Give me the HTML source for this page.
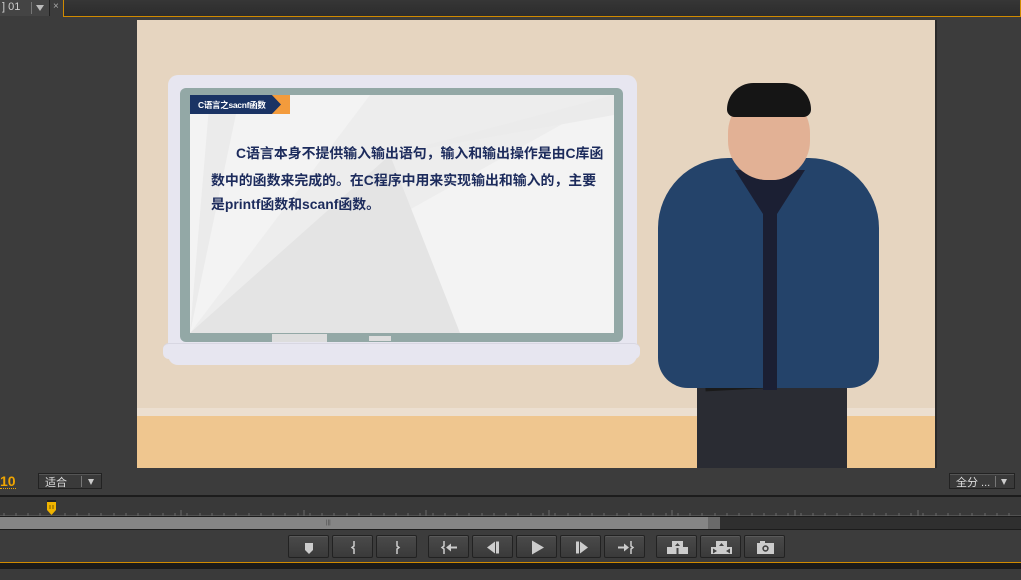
<!DOCTYPE html>
<html><head><meta charset="utf-8"><style>
*{margin:0;padding:0;box-sizing:border-box}
body{width:1021px;height:580px;background:#3c3c3c;position:relative;overflow:hidden;font-family:"Liberation Sans","Noto Sans CJK SC",sans-serif}
.a{position:absolute}
.btn{position:absolute;top:535px;width:41px;height:23px;background:linear-gradient(#4a4a4a,#3a3a3a);border:1px solid #222;box-shadow:inset 0 1px 0 #5a5a5a;border-radius:2px}
.btn svg{position:absolute;left:0;top:0}
.ln{position:absolute;white-space:nowrap;font-size:13.9px;line-height:18px;font-weight:bold;color:#1c2b5c}
</style></head><body>
<div class="a" style="left:0;top:0;width:50px;height:16px;background:#444;border-right:1px solid #222"></div>
<div class="a" style="left:2px;top:1px;font-size:11px;color:#ccc">] 01</div>
<div class="a" style="left:31px;top:2px;width:1px;height:12px;background:#777"></div>
<div class="a" style="left:36px;top:5px;border-left:4px solid transparent;border-right:4px solid transparent;border-top:6px solid #bbb"></div>
<div class="a" style="left:53px;top:1px;font-size:10px;color:#aaa">×</div>
<div class="a" style="left:63px;top:0;width:958px;height:17px;background:linear-gradient(#363636,#2c2c2c);border:1px solid #d08a00;border-top:none"></div>

<div class="a" style="left:137px;top:20px;width:798px;height:448px;background:#e6d5c0;overflow:hidden">
  <div class="a" style="left:0;top:388px;width:798px;height:8px;background:#ecdfd0"></div>
  <div class="a" style="left:0;top:396px;width:798px;height:52px;background:#efc68f"></div>
  <div class="a" style="left:31px;top:55px;width:469px;height:290px;background:#e7e6f0;border-radius:10px"></div>
  <div class="a" style="left:26px;top:323px;width:477px;height:16px;background:#e7e6f0;border-radius:6px;border-top:1px solid #d8d7e2"></div>
  <div class="a" style="left:43px;top:68px;width:443px;height:254px;background:#93a8a6;border-radius:6px"></div>
  <div class="a" style="left:135px;top:314px;width:55px;height:8px;background:#ddd"></div>
  <div class="a" style="left:232px;top:316px;width:22px;height:5px;background:#ddd"></div>
  <div class="a" style="left:53px;top:75px;width:424px;height:238px;background:#f3f3f3;overflow:hidden">
    <svg width="424" height="238" class="a" style="left:0;top:0">
      <polygon points="0,238 180,0 424,0" fill="#e9e9e9" opacity=".6"/>
      <polygon points="0,238 200,60 270,238" fill="#e4e4e4"/>
      <polygon points="0,238 20,0 50,0" fill="#ebebeb"/>
      <polygon points="200,60 424,0 424,20" fill="#ebebeb"/>
    </svg>
    <div class="a" style="left:0;top:0;width:100px;height:19px;background:#f39b3c"></div>
    <div class="a" style="left:0;top:0;width:91px;height:19px;background:#1a3364;clip-path:polygon(0 0,90% 0,100% 50%,90% 100%,0 100%)"></div>
    <div class="a" style="left:8px;top:4px;font-size:8.5px;font-weight:bold;color:#fff;letter-spacing:-.3px;white-space:nowrap">C语言之sacnf函数</div>
    <div class="ln" style="left:46px;top:49px">C语言本身不提供输入输出语句，输入和输出操作是由C库函</div>
    <div class="ln" style="left:21px;top:76px">数中的函数来完成的。在C程序中用来实现输出和输入的，主要</div>
    <div class="ln" style="left:21px;top:100px">是printf函数和scanf函数。</div>
  </div>
  <div class="a" style="left:560px;top:300px;width:150px;height:148px;background:#2a2c33;border-radius:10px 10px 0 0"></div>
  <div class="a" style="left:568px;top:348px;width:130px;height:20px;background:#1a1a1a;transform:rotate(-3deg)"></div>
  <div class="a" style="left:521px;top:138px;width:221px;height:230px;background:#24436a;border-radius:70px 70px 30px 30px"></div>
  <div class="a" style="left:598px;top:150px;width:70px;height:220px;background:#1b1f33;clip-path:polygon(0 0,100% 0,60% 20%,60% 100%,40% 100%,40% 20%)"></div>
  <div class="a" style="left:600px;top:110px;width:66px;height:50px;background:#d9a88d;border-radius:0 0 30px 30px"></div>
  <div class="a" style="left:591px;top:72px;width:82px;height:88px;background:#e2b195;border-radius:42px 42px 40px 40px"></div>
  <div class="a" style="left:590px;top:63px;width:84px;height:34px;background:#151515;border-radius:42px 42px 12px 12px"></div>
</div>
<div class="a" style="left:935px;top:20px;width:2px;height:448px;background:#2a2a2a"></div>

<div class="a" style="left:0;top:473px;font-size:14px;font-weight:bold;color:#f0a500">10</div>
<div class="a" style="left:0;top:488px;width:16px;height:1px;border-top:1px dotted #f0a500"></div>
<div class="a" style="left:38px;top:473px;width:64px;height:16px;background:#3a3a3a;border:1px solid #222;box-shadow:inset 0 1px 0 #555"></div>
<div class="a" style="left:45px;top:474px;font-size:11px;color:#ddd">适合</div>
<div class="a" style="left:81px;top:476px;width:1px;height:11px;background:#777"></div>
<div class="a" style="left:88px;top:479px;border-left:3.5px solid transparent;border-right:3.5px solid transparent;border-top:6px solid #ccc"></div>
<div class="a" style="left:949px;top:473px;width:66px;height:16px;background:#3a3a3a;border:1px solid #222;box-shadow:inset 0 1px 0 #555"></div>
<div class="a" style="left:956px;top:474px;font-size:11px;color:#ddd">全分 ...</div>
<div class="a" style="left:995px;top:476px;width:1px;height:11px;background:#777"></div>
<div class="a" style="left:1001px;top:479px;border-left:3.5px solid transparent;border-right:3.5px solid transparent;border-top:6px solid #ccc"></div>

<div class="a" style="left:0;top:495px;width:1021px;height:2px;background:#1c1c1c"></div>
<div class="a" style="left:0;top:497px;width:1021px;height:19px;background:#393939"></div>
<svg class="a" style="left:0;top:505px" width="1021" height="12">
  <g stroke="#6a6a6a" stroke-width="1"><path d="M0 11H1021"/></g>
  <g stroke="#6a6a6a">
    <path d="M4 8v3M16 8v3M28 8v3M40 8v3M65 8v3M77 8v3M89 8v3M101 8v3M114 8v3M126 8v3M138 8v3M150 8v3M163 8v3M175 8v3M187 8v3M200 8v3M212 8v3M224 8v3M236 8v3M249 8v3M261 8v3M273 8v3M285 8v3M298 8v3M310 8v3M322 8v3M334 8v3M347 8v3M359 8v3M371 8v3M384 8v3M396 8v3M408 8v3M420 8v3M433 8v3M445 8v3M457 8v3M469 8v3M482 8v3M494 8v3M506 8v3M518 8v3M531 8v3M543 8v3M555 8v3M568 8v3M580 8v3M592 8v3M604 8v3M617 8v3M629 8v3M641 8v3M653 8v3M666 8v3M678 8v3M690 8v3M702 8v3M715 8v3M727 8v3M739 8v3M752 8v3M764 8v3M776 8v3M788 8v3M801 8v3M813 8v3M825 8v3M837 8v3M850 8v3M862 8v3M874 8v3M886 8v3M899 8v3M911 8v3M923 8v3M936 8v3M948 8v3M960 8v3M972 8v3M985 8v3M997 8v3M1009 8v3"/>
    <path d="M181 5v6M304 5v6M426 5v6M549 5v6M672 5v6M795 5v6M918 5v6"/>
  </g>
</svg>
<svg class="a" style="left:46px;top:500px" width="12" height="16"><rect x="1" y="0" width="9" height="2" fill="#222"/><path d="M1 2h9v8l-4.5 5-4.5-5z" fill="#f0b400"/><path d="M4 5v4M7 5v4" stroke="#7a5a00"/></svg>
<div class="a" style="left:0;top:516px;width:1021px;height:1px;background:#1c1c1c"></div>
<div class="a" style="left:0;top:517px;width:708px;height:12px;background:#858585"></div>
<div class="a" style="left:326px;top:520px;font-size:6px;color:#444">|||</div>
<div class="a" style="left:708px;top:517px;width:12px;height:12px;background:#6a6a6a"></div>
<div class="a" style="left:720px;top:517px;width:301px;height:12px;background:#2f2f2f"></div>
<div class="a" style="left:0;top:529px;width:1021px;height:1px;background:#1c1c1c"></div>

<div class="btn" style="left:288px"><svg width="41" height="23"><path d="M16 7h8v7l-4 4-4-4z" fill="#ccc"/></svg></div>
<div class="btn" style="left:332px"><svg width="41" height="23"><path d="M21 5v5l-2 1.5 2 1.5v5" stroke="#ccc" fill="none" stroke-width="1.5"/></svg></div>
<div class="btn" style="left:376px"><svg width="41" height="23"><path d="M20 5v5l2 1.5-2 1.5v5" stroke="#ccc" fill="none" stroke-width="1.5"/></svg></div>
<div class="btn" style="left:428px"><svg width="41" height="23"><path d="M15 5v5l-2 1.5 2 1.5v5" stroke="#ccc" fill="none" stroke-width="1.5"/><path d="M17 11.5l5-4v3h6v2h-6v3z" fill="#ccc"/></svg></div>
<div class="btn" style="left:472px"><svg width="41" height="23"><path d="M14 11.5l8-6v12z" fill="#ccc"/><rect x="23" y="5.5" width="3" height="12" fill="#ccc"/></svg></div>
<div class="btn" style="left:516px"><svg width="41" height="23"><path d="M15 4.5l12 7-12 7z" fill="#ccc"/></svg></div>
<div class="btn" style="left:560px"><svg width="41" height="23"><rect x="15" y="5.5" width="3" height="12" fill="#ccc"/><path d="M19 5.5l8 6-8 6z" fill="#ccc"/></svg></div>
<div class="btn" style="left:604px"><svg width="41" height="23"><path d="M13 10.5h6v-3l5 4-5 4v-3h-6z" fill="#ccc"/><path d="M26 5v5l2 1.5-2 1.5v5" stroke="#ccc" fill="none" stroke-width="1.5"/></svg></div>
<div class="btn" style="left:656px"><svg width="41" height="23"><rect x="10" y="11" width="21" height="7" fill="#ccc"/><rect x="15" y="5" width="11" height="7" fill="#ccc"/><path d="M18 10l2.5-3 2.5 3z" fill="#444"/><rect x="19.5" y="12" width="2" height="6" fill="#444"/></svg></div>
<div class="btn" style="left:700px"><svg width="41" height="23"><rect x="15" y="5" width="11" height="7" fill="#ccc"/><path d="M18 10l2.5-3 2.5 3z" fill="#444"/><rect x="10" y="11" width="21" height="7" fill="#ccc"/><path d="M12 12.5l4 2.5-4 2.5zM29 12.5l-4 2.5 4 2.5z" fill="#444"/></svg></div>
<div class="btn" style="left:744px"><svg width="41" height="23"><rect x="12" y="7" width="17" height="11" fill="#ccc"/><rect x="15" y="5" width="5" height="3" fill="#ccc"/><circle cx="20.5" cy="12.5" r="3.2" fill="#444"/><circle cx="20.5" cy="12.5" r="1.6" fill="#ccc"/></svg></div>

<div class="a" style="left:0;top:562px;width:1021px;height:1px;background:#d08a00"></div>
<div class="a" style="left:0;top:563px;width:1021px;height:6px;background:#1a1a1a"></div>
<div class="a" style="left:0;top:569px;width:1021px;height:11px;background:#3a3a3a"></div>
</body></html>
